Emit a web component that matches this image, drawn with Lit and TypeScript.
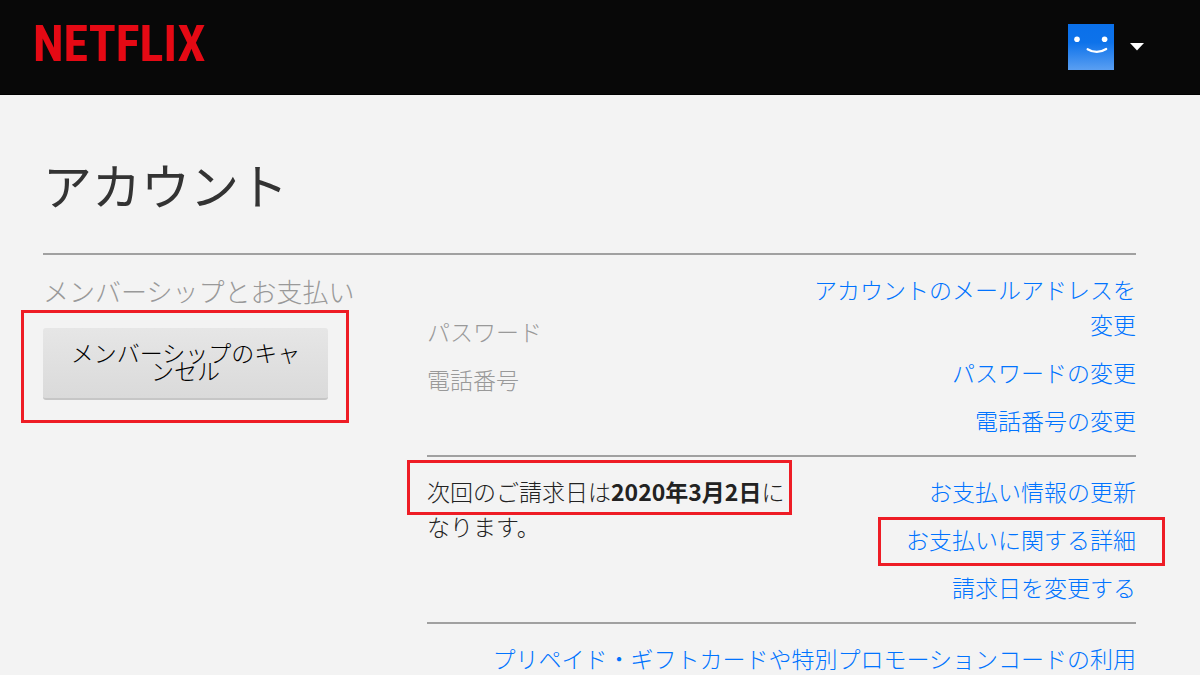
import { LitElement, html, css, svg } from "lit";
import { customElement } from "lit/decorators.js";

const avatar = svg`
  <svg class="avatar" viewBox="0 0 46 46" aria-hidden="true">
    <defs>
      <linearGradient id="sky" x1="0" y1="0" x2="0" y2="1">
        <stop offset="0" stop-color="#0a70ea" />
        <stop offset="0.4" stop-color="#0d72ea" />
        <stop offset="1" stop-color="#5a9ff2" />
      </linearGradient>
    </defs>
    <rect width="46" height="46" fill="url(#sky)" />
    <circle cx="9" cy="15.2" r="2.8" fill="#fff" />
    <circle cx="36.6" cy="15.2" r="2.8" fill="#fff" />
    <path d="M19.6 25.2 Q29 30.800 38.200 25" fill="none" stroke="#fff" stroke-width="2.200" stroke-linecap="round" />
  </svg>`;

@customElement("app-root")
export class AppRoot extends LitElement {
  static styles = css`
    :host {
      display: block;
      min-height: 100vh;
      background: #f3f3f3;
      color: #222;
      font-family: "Noto Sans CJK JP", sans-serif;
      font-weight: 300;
      font-size: 23px;
      line-height: 35px;
    }
    * { box-sizing: border-box; }
    a { color: #0073ff; text-decoration: none; }
    .header {
      display: flex;
      align-items: center;
      justify-content: space-between;
      height: 95px;
      padding: 0 56px 0 33px;
      background: #080808;
      border-bottom: 1px solid #000;
    }
    .logo {
      margin-bottom: 7px;
      color: #e50914;
      font-family: "Liberation Sans Narrow", "Roboto Condensed", "Open Sans Condensed", sans-serif;
      font-weight: 700;
      font-size: 50px;
      line-height: 50px;
    }
    .profile {
      display: flex;
      align-items: center;
      gap: 16px;
      padding: 0;
      border: 0;
      background: none;
    }
    .avatar { display: block; width: 46px; height: 46px; }
    .caret { display: block; width: 14px; height: 8px; }
    .main { padding: 54px 64px 0 43px; }
    .title {
      margin: 0;
      padding-bottom: 34px;
      border-bottom: 2px solid #a0a0a0;
      color: #333;
      font-size: 49px;
      font-weight: 400;
      line-height: 70px;
    }
    .section {
      display: grid;
      grid-template-columns: minmax(0, 384fr) minmax(0, 709fr);
    }
    .side { padding-top: 18px; }
    .side-title {
      margin: 0 0 20px;
      color: #999;
      font-size: 26px;
      font-weight: 300;
      line-height: 35px;
      white-space: nowrap;
    }
    .cancel {
      position: relative;
      display: block;
      width: 285px;
      height: 72px;
      padding: 0 24px 4px;
      border: 0;
      border-bottom: 2px solid #c6c6c6;
      border-radius: 3px;
      background: linear-gradient(#e6e6e6, #dadada);
      color: #000;
      font: inherit;
      line-height: 18px;
    }
    .group {
      display: grid;
      grid-template-columns: minmax(0, 366fr) minmax(0, 343fr);
      padding: 17px 0;
      border-bottom: 2px solid #a0a0a0;
    }
    .group.last { display: flex; justify-content: flex-end; border: 0; }
    .labels, .links {
      display: flex;
      flex-direction: column;
      gap: 13px;
      margin: 0;
      padding: 0;
      list-style: none;
    }
    .labels { padding-top: 42px; color: #999; }
    .links { text-align: right; }
    .billing { position: relative; margin: 0; }
    .billing b { font-weight: 700; }
    .marked { position: relative; display: inline-block; }
    .mark {
      position: absolute;
      border: 3px solid #ee1c25;
      pointer-events: none;
    }
    .mark-cancel { inset: -18px -21px -25px -22px; }
    .mark-date { top: -14px; left: -20px; right: 1px; height: 55px; }
    .mark-detail { inset: -5px -29px -9px -28px; }
  `;

  render() {
    return html`
      <header class="header">
        <a class="logo" href="#">NETFLIX</a>
        <button class="profile" type="button" aria-label="プロフィール">
          ${avatar}
          <svg class="caret" viewBox="0 0 14 8" aria-hidden="true"><path d="M0 0H14L7 7.500Z" fill="#fff" /></svg>
        </button>
      </header>
      <main class="main">
        <h1 class="title">アカウント</h1>
        <section class="section">
          <div class="side">
            <h2 class="side-title">メンバーシップとお支払い</h2>
            <button class="cancel" type="button">メンバーシップのキャンセル<span class="mark mark-cancel"></span></button>
          </div>
          <div>
            <div class="group">
              <ul class="labels">
                <li>パスワード</li>
                <li>電話番号</li>
              </ul>
              <ul class="links">
                <li><a href="#">アカウントのメールアドレスを変更</a></li>
                <li><a href="#">パスワードの変更</a></li>
                <li><a href="#">電話番号の変更</a></li>
              </ul>
            </div>
            <div class="group">
              <p class="billing">次回のご請求日は<b>2020年3月2日</b>に<wbr>なります。<span class="mark mark-date"></span></p>
              <ul class="links">
                <li><a href="#">お支払い情報の更新</a></li>
                <li><a class="marked" href="#">お支払いに関する詳細<span class="mark mark-detail"></span></a></li>
                <li><a href="#">請求日を変更する</a></li>
              </ul>
            </div>
            <div class="group last">
              <a href="#">プリペイド・ギフトカードや特別プロモーションコードの利用</a>
            </div>
          </div>
        </section>
      </main>
    `;
  }
}
